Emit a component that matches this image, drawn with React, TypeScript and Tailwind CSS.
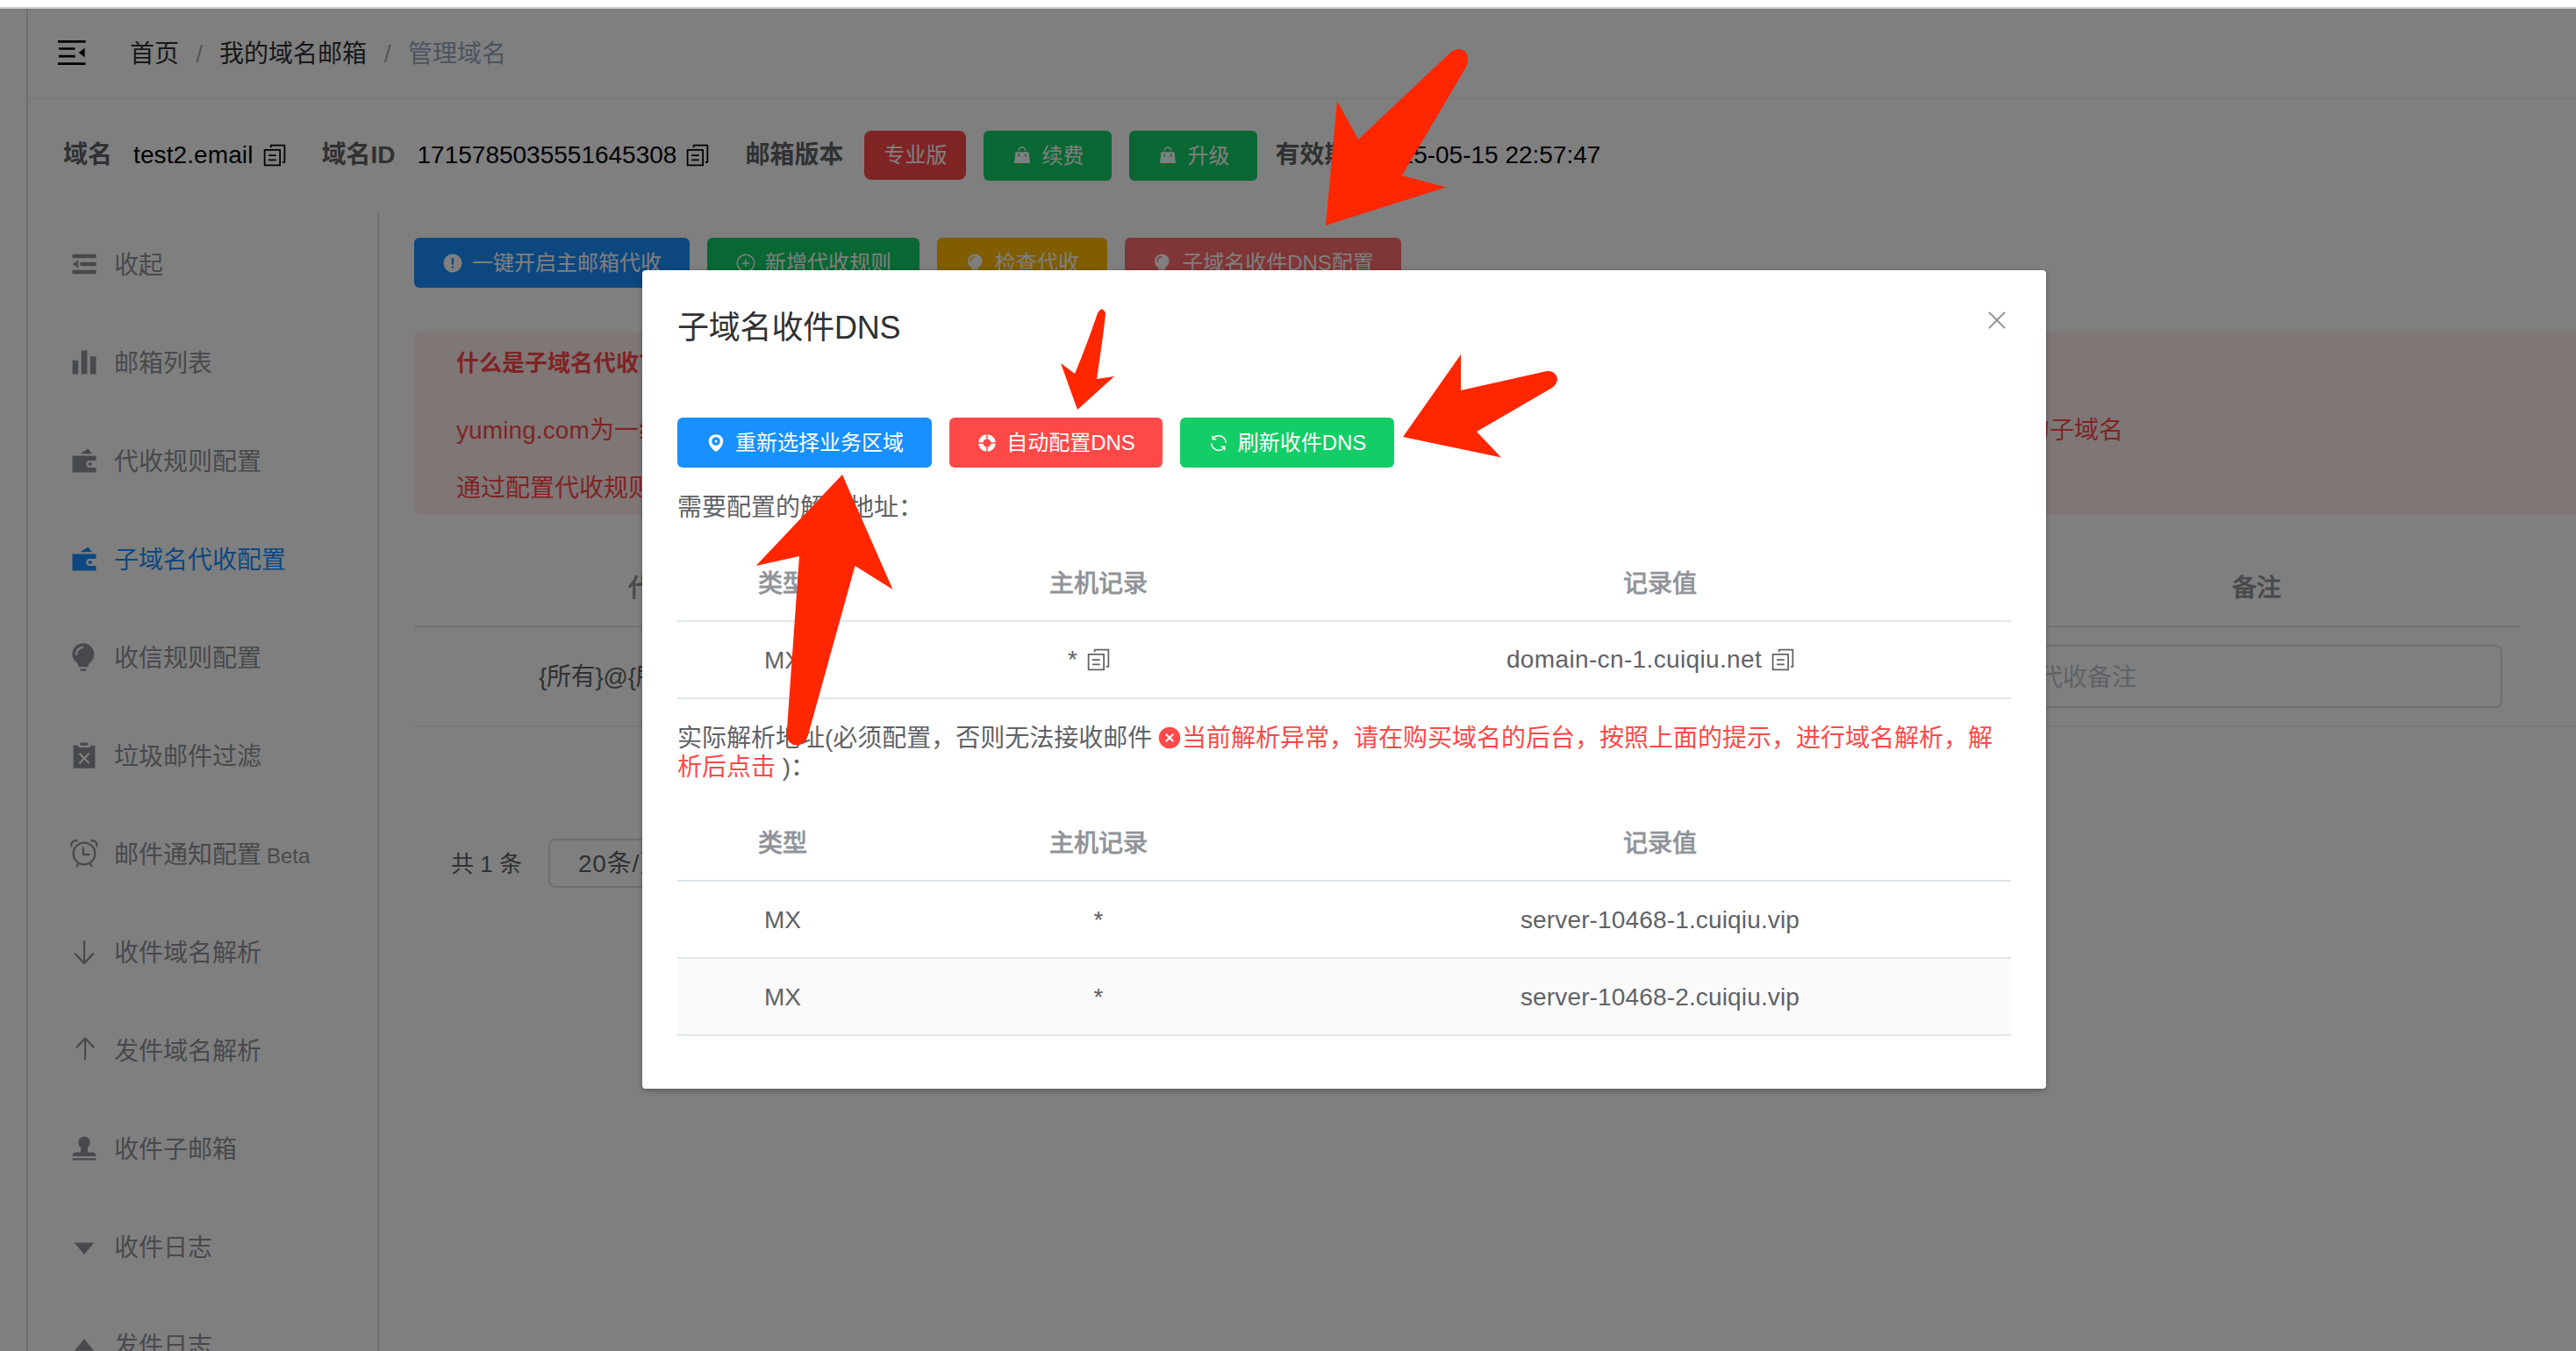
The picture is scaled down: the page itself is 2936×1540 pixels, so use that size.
import type { ReactNode } from 'react';

const PATHS = {
  copy: 'M128 320v576h576V320zm-32-64h640a32 32 0 0 1 32 32v640a32 32 0 0 1-32 32H96a32 32 0 0 1-32-32V288a32 32 0 0 1 32-32M960 96v704a32 32 0 0 1-32 32h-96v-64h64V128H384v64h-64V96a32 32 0 0 1 32-32h576a32 32 0 0 1 32 32M256 672h320v64H256zm0-192h320v64H256z',
  goods: 'M192 352h640l64 544H128zm128 224h64V448h-64zm320 0h64V448h-64zM384 288h-64a192 192 0 1 1 384 0h-64a128 128 0 1 0-256 0',
  fold: 'M896 192H128v128h768zm0 256H384v128h512zm0 256H128v128h768zM320 384 128 512l192 128z',
  histogram: 'M416 896V128h192v768zm-288 0V448h192v448zm576 0V320h192v576z',
  wallet: 'M688 512a112 112 0 1 0 0 224h208v160H128V352h768v160zm32 160h-32a48 48 0 0 1 0-96h32a48 48 0 0 1 0 96m-80-544 128 160H384z',
  bulb: 'M384 960v-64h192.064v64zm448-544a350.656 350.656 0 0 1-128.32 271.424C665.344 719.04 640 763.776 640 813.504V832H320v-14.336c0-48-19.392-95.36-57.216-124.992a351.552 351.552 0 0 1-128.448-344.256c25.344-136.448 133.888-248.128 269.76-276.48A352.384 352.384 0 0 1 832 416m-544 32c0-132.288 75.904-224 192-224v-64c-154.432 0-256 122.752-256 288z',
  failed: 'm557.248 608 135.744-135.744-45.248-45.248-135.68 135.744-135.808-135.68-45.248 45.184L466.752 608l-135.68 135.68 45.184 45.312L512 653.248l135.744 135.744 45.248-45.248L557.312 608zM704 192h160v736H160V192h160v64h384zm-320 0V96h256v96z',
  alarm: 'M512 832a320 320 0 1 0 0-640 320 320 0 0 0 0 640m0 64a384 384 0 1 1 0-768 384 384 0 0 1 0 768M292.288 824.576l55.424 32-48 83.136a32 32 0 1 1-55.424-32zm439.424 0-55.424 32 48 83.136a32 32 0 1 0 55.424-32zM512 512h160a32 32 0 1 1 0 64H480a32 32 0 0 1-32-32V320a32 32 0 0 1 64 0zM90.496 312.256A160 160 0 0 1 312.32 90.496l-46.848 46.848a96 96 0 0 0-128 128L90.56 312.256zm835.264 0A160 160 0 0 0 704 90.496l46.848 46.848a96 96 0 0 1 128 128z',
  bottom: 'M544 805.888V168a32 32 0 1 0-64 0v637.888L246.656 557.952a30.72 30.72 0 0 0-45.312 0 35.52 35.52 0 0 0 0 48.064l288 306.048a30.72 30.72 0 0 0 45.312 0l288-306.048a35.52 35.52 0 0 0 0-48 30.72 30.72 0 0 0-45.312 0L544 805.824z',
  top: 'M572.235 205.282v600.365a30.118 30.118 0 1 1-60.235 0V205.282L292.382 438.633a28.913 28.913 0 0 1-42.646 0 33.43 33.43 0 0 1 0-45.236l271.058-288.045a28.913 28.913 0 0 1 42.647 0L834.5 393.397a33.43 33.43 0 0 1 0 45.176 28.913 28.913 0 0 1-42.647 0l-219.618-233.23z',
  stamp: 'M624 475.968V640h144a128 128 0 0 1 128 128H128a128 128 0 0 1 128-128h144V475.968a192 192 0 1 1 224 0M128 896v-64h768v64z',
  caretBottom: 'm192 384 320 384 320-384z',
  caretTop: 'M512 320 192 704h639.936z',
  warning: 'M512 64a448 448 0 1 1 0 896 448 448 0 0 1 0-896m0 192a58.432 58.432 0 0 0-58.24 63.744l23.36 256.384a35.072 35.072 0 0 0 69.76 0l23.296-256.384A58.432 58.432 0 0 0 512 256m0 512a51.2 51.2 0 1 0 0-102.4 51.2 51.2 0 0 0 0 102.4',
  circlePlus: 'M352 480h320a32 32 0 1 1 0 64H352a32 32 0 0 1 0-64M480 672V352a32 32 0 1 1 64 0v320a32 32 0 0 1-64 0M512 896a384 384 0 1 0 0-768 384 384 0 0 0 0 768m0 64a448 448 0 1 1 0-896 448 448 0 0 1 0 896',
  location: 'M512 928c23.936 0 117.504-68.352 192.064-153.152C803.456 661.888 864 535.808 864 416c0-189.632-155.84-320-352-320S160 226.368 160 416c0 120.32 60.544 246.4 159.936 359.232C394.432 859.84 488 928 512 928m0-435.2a64 64 0 1 0 0-128 64 64 0 0 0 0 128m0 140.8a204.8 204.8 0 1 1 0-409.6 204.8 204.8 0 0 1 0 409.6',
  help: 'M926.784 480H701.312A192.512 192.512 0 0 0 544 322.688V97.216A416.064 416.064 0 0 1 926.784 480m0 64A416.064 416.064 0 0 1 544 926.784V701.312A192.512 192.512 0 0 0 701.312 544zM97.28 544h225.472A192.512 192.512 0 0 0 480 701.312v225.472A416.064 416.064 0 0 1 97.216 544zm0-64A416.064 416.064 0 0 1 480 97.216v225.472A192.512 192.512 0 0 0 322.688 480H97.216z',
  refresh: 'M771.776 794.88A384 384 0 0 1 128 512h64a320 320 0 0 0 555.712 216.448H654.72a32 32 0 1 1 0-64h149.056a32 32 0 0 1 32 32v148.928a32 32 0 1 1-64 0v-50.56zM276.288 295.616h92.992a32 32 0 0 1 0 64H220.16a32 32 0 0 1-32-32V178.56a32 32 0 0 1 64 0v50.56A384 384 0 0 1 896.128 512h-64a320 320 0 0 0-555.776-216.384z',
  circleClose: 'M512 64a448 448 0 1 1 0 896 448 448 0 0 1 0-896m0 393.664L407.936 353.6a38.4 38.4 0 1 0-54.336 54.336L457.664 512 353.6 616.064a38.4 38.4 0 1 0 54.336 54.336L512 566.336 616.064 670.4a38.4 38.4 0 1 0 54.336-54.336L566.336 512 670.4 407.936a38.4 38.4 0 1 0-54.336-54.336z',
  close: 'M764.288 214.592 512 466.88 259.712 214.592a31.936 31.936 0 0 0-45.12 45.12L466.752 512 214.528 764.224a31.936 31.936 0 1 0 45.12 45.184L512 557.184l252.288 252.288a31.936 31.936 0 0 0 45.12-45.12L557.12 512.064l252.288-252.352a31.936 31.936 0 1 0-45.12-45.184z',
};

type IconName = keyof typeof PATHS;

function Icon({ name, className = '' }: { name: IconName; className?: string }) {
  return (
    <svg viewBox="0 0 1024 1024" fill="currentColor" className={`shrink-0 ${className}`}>
      <path d={PATHS[name]} />
    </svg>
  );
}

function Button({ icon, className, children }: { icon: IconName; className: string; children: ReactNode }) {
  return (
    <button className={`flex h-[57px] shrink-0 items-center justify-center gap-[10px] whitespace-nowrap rounded-[6px] text-[24px] leading-none text-white ${className}`}>
      <Icon name={icon} className="size-6" />
      <span className="pt-px">{children}</span>
    </button>
  );
}

const NAV: { icon: IconName; label: string; beta?: boolean; active?: boolean }[] = [
  { icon: 'fold', label: '收起' },
  { icon: 'histogram', label: '邮箱列表' },
  { icon: 'wallet', label: '代收规则配置' },
  { icon: 'wallet', label: '子域名代收配置', active: true },
  { icon: 'bulb', label: '收信规则配置' },
  { icon: 'failed', label: '垃圾邮件过滤' },
  { icon: 'alarm', label: '邮件通知配置', beta: true },
  { icon: 'bottom', label: '收件域名解析' },
  { icon: 'top', label: '发件域名解析' },
  { icon: 'stamp', label: '收件子邮箱' },
  { icon: 'caretBottom', label: '收件日志' },
  { icon: 'caretTop', label: '发件日志' },
];

function TopBar() {
  return (
    <header className="flex h-[104px] shrink-0 items-center border-b-4 border-[#f4f8f8] pl-[34px]">
      <svg viewBox="0 0 32 28" className="h-7 w-8" fill="#000">
        <path d="M0 0h31.5v2.8H0zM1 8.2h18.6v2.6H1zM1 16.8h18.6v2.6H1zM0 25.2h31.5v2.8H0zM30.6 8.6v11l-6.8-5.5z" />
      </svg>
      <nav className="ml-[50px] flex items-center pt-[3px] text-[28px] leading-none text-[#303133]">
        <span>首页</span>
        <span className="w-[46px] text-center text-[#a8abb2]">/</span>
        <span>我的域名邮箱</span>
        <span className="w-[47px] text-center text-[#a8abb2]">/</span>
        <span className="text-[#97a8be]">管理域名</span>
      </nav>
    </header>
  );
}

function InfoRow() {
  return (
    <div className="flex h-[129px] shrink-0 items-center whitespace-nowrap pb-[3px] pl-10 text-[28px] leading-none text-black">
      <b className="text-[#606266]">域名</b>
      <span className="ml-6 tracking-[0.1px]">test2.email</span>
      <Icon name="copy" className="ml-[10px] size-7" />
      <b className="ml-10 text-[#606266]">域名ID</b>
      <span className="ml-[25px]">1715785035551645308</span>
      <Icon name="copy" className="ml-[10px] size-7" />
      <b className="ml-10 text-[#606266]">邮箱版本</b>
      <span className="ml-6 flex h-14 w-[116px] items-center justify-center rounded-[8px] bg-[#ff4949] text-[24px] text-white">
        专业版
      </span>
      <Button icon="goods" className="ml-5 w-[146px] bg-[#13ce66]">续费</Button>
      <Button icon="goods" className="ml-5 w-[146px] bg-[#13ce66]">升级</Button>
      <b className="ml-5 text-[#606266]">有效期</b>
      <span className="ml-[27px]">2025-05-15 22:57:47</span>
    </div>
  );
}

function SideNav() {
  return (
    <aside className="w-[400px] shrink-0 border-r-2 border-[#dcdfe6] pt-[2px]">
      {NAV.map((item) => (
        <div
          key={item.label}
          className={`flex h-28 items-center pl-[46px] text-[28px] leading-none ${item.active ? 'text-[#1890ff]' : 'text-[#909399]'}`}
        >
          <Icon name={item.icon} className="size-9" />
          <span className="ml-4 pt-[3px]">{item.label}</span>
          {item.beta && <span className="ml-[6px] pt-[6px] text-[24px]">Beta</span>}
        </div>
      ))}
    </aside>
  );
}

function MainContent() {
  return (
    <main className="flex min-w-0 flex-1 flex-col pl-10 pt-7">
      <div className="flex gap-5">
        <Button icon="warning" className="w-[314px] bg-[#1890ff]">一键开启主邮箱代收</Button>
        <Button icon="circlePlus" className="w-[242px] bg-[#13ce66]">新增代收规则</Button>
        <Button icon="bulb" className="w-[194px] bg-[#ffba00]">检查代收</Button>
        <Button icon="bulb" className="w-[315px] bg-[#ff6d6d]">子域名收件DNS配置</Button>
      </div>
      <section className="mt-[50px] flex h-[209px] flex-col rounded-l-[8px] bg-[#ffeded] pl-12 text-[28px] text-[#ff4949]">
        <b className="mt-[16px] text-[26px] leading-10">什么是子域名代收？</b>
        <div className="mt-[37px] flex leading-10">
          <span className="w-[1788px] tracking-[0.1px]">yuming.com为一级域名</span>
          <span>的子域名</span>
        </div>
        <span className="mt-[26px] leading-10">通过配置代收规则</span>
      </section>
      <div className="mt-[38px] flex h-[90px] w-[2400px] items-center border-b-2 border-[#dfe6ec] pt-[3px] text-[28px] leading-none text-[#909399] [-webkit-text-stroke:0.9px]">
        <span className="w-[600px] text-center">代收规则</span>
        <span className="ml-[1200px] w-[600px] text-center">备注</span>
      </div>
      <div className="flex h-[114px] items-center border-b-2 border-[#ebeef5] text-[28px] leading-none text-[#606266]">
        <span className="w-[1820px] pl-[142px] pt-[2px] tracking-[-0.3px]">{'{所有}@{所有}.test2.email'}</span>
        <div className="flex h-[72px] w-[560px] items-center rounded-[8px] border-2 border-[#dcdfe6] pl-[29px] pt-[3px] text-[#c0c4cc]">
          代收备注
        </div>
      </div>
      <div className="mt-[127px] flex items-center pl-[42px] leading-none text-[#606266]">
        <span className="pt-[2px] text-[26px]">共 1 条</span>
        <div className="ml-[30px] flex h-14 w-[200px] items-center rounded-[8px] border-2 border-[#dcdfe6] pl-[32px] pt-[2px] text-[28px] tracking-[0.8px]">
          20条/页
        </div>
      </div>
    </main>
  );
}

function Row({ cells, head, striped }: { cells: ReactNode[]; head?: boolean; striped?: boolean }) {
  return (
    <div
      className={`grid h-[88px] grid-cols-[240px_480px_800px] items-center justify-items-center border-b-2 border-[#dfe6ec] text-[28px] leading-none ${
        head ? 'pt-[3px] text-[#909399] [-webkit-text-stroke:0.9px]' : 'pt-px text-[#606266]'
      } ${striped ? 'bg-[#fafafa]' : 'bg-white'}`}
    >
      {cells.map((cell, i) => (
        <div key={i}>{cell}</div>
      ))}
    </div>
  );
}

function Copyable({ children }: { children: ReactNode }) {
  return (
    <div className="flex items-center gap-[10px] pb-[2px] pr-[21px]">
      {children}
      <Icon name="copy" className="size-7" />
    </div>
  );
}

function Dialog() {
  return (
    <div className="ml-[732px] mt-[298px] h-[933px] w-[1600px] rounded-[4px] bg-white px-10 shadow-[0_2px_6px_rgba(0,0,0,0.3)]">
      <div className="flex h-[168px] items-start justify-between pt-[41px]">
        <h2 className="pt-px text-[36px] leading-[48px] tracking-[-0.2px] text-[#303133]">子域名收件DNS</h2>
        <Icon name="close" className="size-8 text-[#909399]" />
      </div>
      <div className="flex gap-5">
        <Button icon="location" className="w-[290px] bg-[#1890ff]">重新选择业务区域</Button>
        <Button icon="help" className="w-[243px] bg-[#ff4949]">自动配置DNS</Button>
        <Button icon="refresh" className="w-[244px] bg-[#13ce66]">刷新收件DNS</Button>
      </div>
      <p className="mt-[29px] text-[28px] leading-[33px] text-[#606266]">需要配置的解析地址：</p>
      <div className="mt-[26px]">
        <Row head cells={['类型', '主机记录', '记录值']} />
        <Row
          cells={[
            'MX',
            <Copyable><span>*</span></Copyable>,
            <Copyable><span className="tracking-[0.36px]">domain-cn-1.cuiqiu.net</span></Copyable>,
          ]}
        />
      </div>
      <p className="mt-[28px] text-[28px] leading-[33px] text-[#606266]">
        实际解析地址(必须配置，否则无法接收邮件{' '}
        <span className="text-[#ff4949]">
          <Icon name="circleClose" className="-ml-[2px] inline-block size-7 align-[-4px]" />
          当前解析异常，请在购买域名的后台，按照上面的提示，进行域名解析，解析后点击
        </span>
        {' '})：
      </p>
      <div className="mt-[26px]">
        <Row head cells={['类型', '主机记录', '记录值']} />
        <Row cells={['MX', '*', <span className="tracking-[0.15px]">server-10468-1.cuiqiu.vip</span>]} />
        <Row striped cells={['MX', '*', <span className="tracking-[0.15px]">server-10468-2.cuiqiu.vip</span>]} />
      </div>
    </div>
  );
}

function Arrows() {
  return (
    <svg viewBox="0 0 2936 1540" className="pointer-events-none absolute inset-0 h-[1540px] w-[2936px]" fill="#ff2600">
      <path d="M1511 257 1524 115 1548 159 1653 60Q1663 52 1671 60 1676 68 1670 78L1598 200 1648 213.5z" />
      <path d="M1228 467 1209 414 1225 426Q1238 395 1251 357 1256 348 1260 357 1259 372 1250 432L1270 429z" />
      <path d="M1599 498 1665 404V445L1763 423Q1772 422 1775 431 1775 438 1769 442L1683 492 1711 521.5z" />
      <path d="M960 541 861.5 645 911 634 896.5 838Q898 849 908 849.5 918 849 921 838L974.5 645 1017.6 672z" />
    </svg>
  );
}

export default function App() {
  return (
    <div className="relative h-[1540px] w-[2936px] overflow-hidden bg-white font-['Liberation_Sans','Noto_Sans_CJK_SC',sans-serif]">
      <div className="flex h-full flex-col">
        <div className="h-[10px] shrink-0 border-b-2 border-[#cccccc]" />
        <div className="ml-[30px] flex min-h-0 flex-1 flex-col border-l-2 border-[#dcdfe6]">
          <TopBar />
          <InfoRow />
          <div className="flex min-h-0 flex-1">
            <SideNav />
            <MainContent />
          </div>
        </div>
      </div>
      <div className="absolute inset-x-0 bottom-0 top-[10px] flex items-start bg-black/50">
        <Dialog />
      </div>
      <Arrows />
    </div>
  );
}
